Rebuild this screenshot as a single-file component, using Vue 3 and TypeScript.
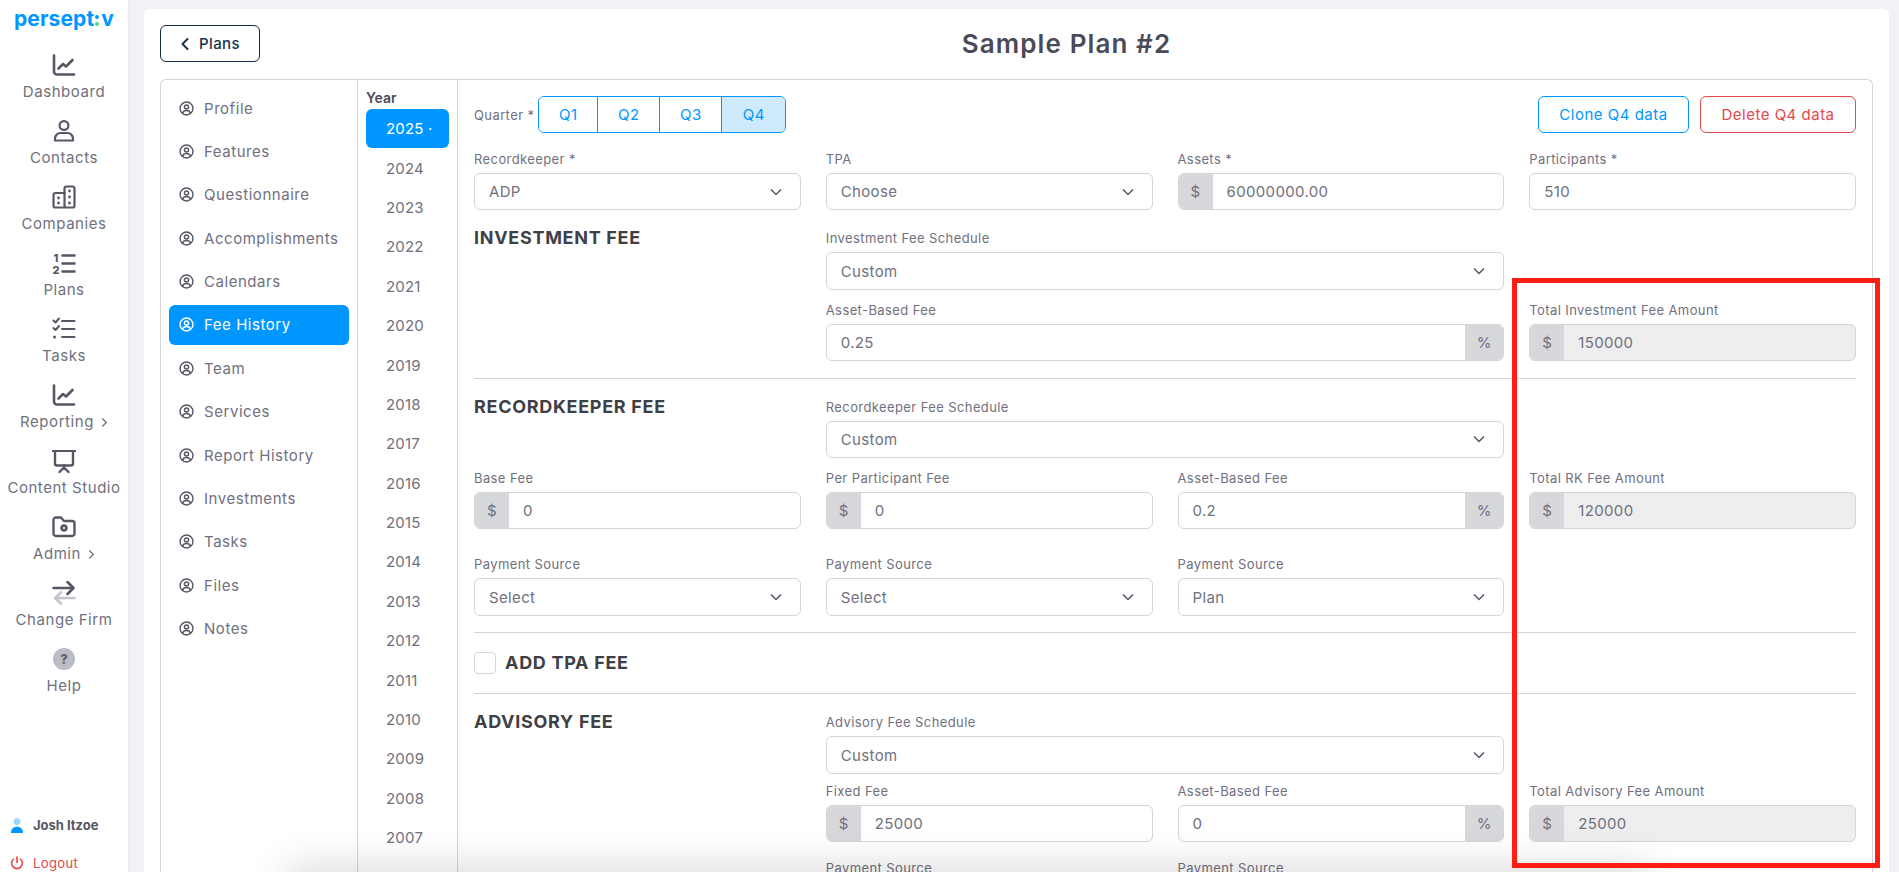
<script setup lang="ts">
const navItems = [
  { label: "Dashboard", icon: "chart" },
  { label: "Contacts", icon: "user" },
  { label: "Companies", icon: "company" },
  { label: "Plans", icon: "numbers" },
  { label: "Tasks", icon: "checks" },
  { label: "Reporting", icon: "chart", more: true },
  { label: "Content Studio", icon: "board" },
  { label: "Admin", icon: "folder", more: true },
  { label: "Change Firm", icon: "swap" },
  { label: "Help", icon: "help" },
];

const tabs = [
  "Profile",
  "Features",
  "Questionnaire",
  "Accomplishments",
  "Calendars",
  "Fee History",
  "Team",
  "Services",
  "Report History",
  "Investments",
  "Tasks",
  "Files",
  "Notes",
];

const years = Array.from({ length: 18 }, (_, i) => 2024 - i);
const quarters = ["Q1", "Q2", "Q3", "Q4"];
</script>

<template>
  <div class="page">
    <aside class="sidebar">
      <div class="logo">persept<span class="logo-dots"><i></i><i class="green"></i></span>v</div>
      <nav class="nav">
        <div v-for="item in navItems" :key="item.label" class="nav-item">
          <svg class="nav-icon" viewBox="0 0 24 24" fill="none" stroke="currentColor" stroke-width="2" stroke-linecap="round" stroke-linejoin="round">
            <template v-if="item.icon === 'chart'">
              <path d="M2 2.5v16a3 3 0 0 0 3 3h17" stroke-width="2.6" />
              <path d="M6.5 15.5l4.5-4.5 3 2.5 6.5-6.5" stroke-width="2.6" />
            </template>
            <template v-else-if="item.icon === 'user'">
              <circle cx="12" cy="6.5" r="4.4" stroke-width="2.2" />
              <path d="M3 21.5v-2a5.5 5.5 0 0 1 5.5-5.5h7a5.5 5.5 0 0 1 5.5 5.5v2z" stroke-width="2.2" />
            </template>
            <template v-else-if="item.icon === 'company'">
              <rect x="12.5" y="1.5" width="10" height="21" rx="2" stroke-width="2.2" />
              <path d="M12.5 8H3.5a2 2 0 0 0-2 2v10.5a2 2 0 0 0 2 2h9" stroke-width="2.2" />
              <path d="M6.5 13v.1M6.5 18v.1M17.5 6v.1M17.5 12v.1M17.5 18v.1" stroke-width="2.8" />
            </template>
            <template v-else-if="item.icon === 'numbers'">
              <text x="1.5" y="10.5" class="icon-digit">1</text>
              <text x="0.5" y="22.5" class="icon-digit">2</text>
              <path d="M10.5 4.5h12M10.5 12.5h12M10.5 20.5h12" stroke-width="2.6" />
            </template>
            <template v-else-if="item.icon === 'checks'">
              <path d="M1.5 3.5l2 2 3.5-4M1.5 11l2 2 3.5-4" stroke-width="2" />
              <path d="M2.5 20v.1" stroke-width="3" />
              <path d="M10 4h12.5M10 12h12.5M10 20h12.5" stroke-width="2" />
            </template>
            <template v-else-if="item.icon === 'board'">
              <path d="M0.5 2h23" stroke-width="2" />
              <path d="M3 2.5v12a2 2 0 0 0 2 2h14a2 2 0 0 0 2-2v-12" stroke-width="2.4" />
              <path d="M12 16.5v2M7.5 23l4.5-4.5 4.5 4.5" stroke-width="2.4" />
            </template>
            <template v-else-if="item.icon === 'folder'">
              <path d="M1.5 5a2.5 2.5 0 0 1 2.5-2.5h5l3 3.5h8a2.5 2.5 0 0 1 2.5 2.5v10a2.5 2.5 0 0 1-2.5 2.5H4a2.5 2.5 0 0 1-2.5-2.5z" stroke-width="2.4" />
              <circle cx="12" cy="13" r="2.4" stroke-width="2.8" stroke-dasharray="2.2 0.6" />
            </template>
            <template v-else-if="item.icon === 'swap'">
              <path d="M1.5 7h20M15.5 1l6 6-6 6" stroke-width="2.6" />
              <path d="M22.5 17H3M9 11.5L3 17l6 5.5" stroke="#c4c4cc" stroke-width="2.6" />
            </template>
            <template v-else>
              <circle cx="12" cy="12" r="11" fill="#bcbcc4" stroke="none" />
              <text x="12" y="16.5" class="icon-help">?</text>
            </template>
          </svg>
          <div class="nav-label">
            {{ item.label }}
            <svg v-if="item.more" class="nav-more" viewBox="0 0 8 12" fill="none" stroke="currentColor" stroke-width="1.5"><path d="M1.5 1.5L6 6l-4.5 4.5" /></svg>
          </div>
        </div>
      </nav>
      <div class="side-foot">
        <div class="foot-user">
          <svg viewBox="0 0 14 15" width="14" height="15">
            <circle cx="7" cy="3.6" r="3.4" fill="#99d5ff" />
            <path d="M1 15c0-4 2.4-6.2 6-6.2s6 2.2 6 6.2z" fill="#0096ff" />
          </svg>
          <span>Josh Itzoe</span>
        </div>
        <div class="foot-logout">
          <svg viewBox="0 0 14 14" width="14" height="14" fill="none" stroke="#e5484d" stroke-width="1.6" stroke-linecap="round">
            <path d="M7 1v5.5" />
            <path d="M3.6 3a5.4 5.4 0 1 0 6.8 0" />
          </svg>
          <span>Logout</span>
        </div>
      </div>
    </aside>

    <main class="card">
      <header class="head">
        <button class="back-btn">
          <svg viewBox="0 0 10 14" width="10" height="14" fill="none" stroke="currentColor" stroke-width="2" stroke-linecap="round" stroke-linejoin="round"><path d="M7.5 2L2.5 7l5 5" /></svg>
          Plans
        </button>
        <h1 class="title">Sample Plan #2</h1>
      </header>

      <div class="box">
        <div class="tabs">
          <div v-for="tab in tabs" :key="tab" class="tab" :class="{ active: tab === 'Fee History' }">
            <svg class="tab-icon" viewBox="0 0 16 16" fill="none" stroke="currentColor" stroke-width="1.5">
              <circle cx="8" cy="8" r="6.9" />
              <circle cx="8" cy="6.4" r="2.2" />
              <path d="M3.8 13c.6-2 2-2.8 4.2-2.8s3.6.8 4.2 2.8" />
            </svg>
            {{ tab }}
          </div>
        </div>

        <div class="years">
          <div class="year-title">Year</div>
          <div class="year active">2025 ·</div>
          <div v-for="y in years" :key="y" class="year">{{ y }}</div>
        </div>

        <div class="form">
          <div class="quarter-row">
            <span class="label inline">Quarter *</span>
            <div class="quarters">
              <button v-for="q in quarters" :key="q" class="quarter" :class="{ on: q === 'Q4' }">{{ q }}</button>
            </div>
            <button class="outline blue">Clone Q4 data</button>
            <button class="outline red">Delete Q4 data</button>
          </div>

          <div class="row top-row">
            <div class="field">
              <div class="label">Recordkeeper *</div>
              <div class="control select">ADP<svg class="caret" viewBox="0 0 12 8"><path d="M1 1.5l5 5 5-5" /></svg></div>
            </div>
            <div class="field">
              <div class="label">TPA</div>
              <div class="control select">Choose<svg class="caret" viewBox="0 0 12 8"><path d="M1 1.5l5 5 5-5" /></svg></div>
            </div>
            <div class="field">
              <div class="label">Assets *</div>
              <div class="control"><span class="addon">$</span><span class="val">60000000.00</span></div>
            </div>
            <div class="field">
              <div class="label">Participants *</div>
              <div class="control plain">510</div>
            </div>
          </div>

          <!-- investment fee -->
          <div class="row sec-row">
            <h3 class="sec-title">INVESTMENT FEE</h3>
            <div class="field span2">
              <div class="label">Investment Fee Schedule</div>
              <div class="control select">Custom<svg class="caret" viewBox="0 0 12 8"><path d="M1 1.5l5 5 5-5" /></svg></div>
            </div>
          </div>
          <div class="row next-row">
            <div class="field span2 from2">
              <div class="label">Asset-Based Fee</div>
              <div class="control"><span class="val nopad">0.25</span><span class="addon right">%</span></div>
            </div>
            <div class="field">
              <div class="label">Total Investment Fee Amount</div>
              <div class="control disabled"><span class="addon">$</span><span class="val">150000</span></div>
            </div>
          </div>
          <div class="divider"></div>

          <!-- recordkeeper fee -->
          <div class="row sec-row">
            <h3 class="sec-title">RECORDKEEPER FEE</h3>
            <div class="field span2">
              <div class="label">Recordkeeper Fee Schedule</div>
              <div class="control select">Custom<svg class="caret" viewBox="0 0 12 8"><path d="M1 1.5l5 5 5-5" /></svg></div>
            </div>
          </div>
          <div class="row next-row">
            <div class="field">
              <div class="label">Base Fee</div>
              <div class="control"><span class="addon">$</span><span class="val">0</span></div>
            </div>
            <div class="field">
              <div class="label">Per Participant Fee</div>
              <div class="control"><span class="addon">$</span><span class="val">0</span></div>
            </div>
            <div class="field">
              <div class="label">Asset-Based Fee</div>
              <div class="control"><span class="val nopad">0.2</span><span class="addon right">%</span></div>
            </div>
            <div class="field">
              <div class="label">Total RK Fee Amount</div>
              <div class="control disabled"><span class="addon">$</span><span class="val">120000</span></div>
            </div>
          </div>
          <div class="row pay-row">
            <div class="field">
              <div class="label">Payment Source</div>
              <div class="control select">Select<svg class="caret" viewBox="0 0 12 8"><path d="M1 1.5l5 5 5-5" /></svg></div>
            </div>
            <div class="field">
              <div class="label">Payment Source</div>
              <div class="control select">Select<svg class="caret" viewBox="0 0 12 8"><path d="M1 1.5l5 5 5-5" /></svg></div>
            </div>
            <div class="field">
              <div class="label">Payment Source</div>
              <div class="control select">Plan<svg class="caret" viewBox="0 0 12 8"><path d="M1 1.5l5 5 5-5" /></svg></div>
            </div>
          </div>
          <div class="divider"></div>

          <div class="tpa-row">
            <span class="check"></span>
            <h3 class="sec-title">ADD TPA FEE</h3>
          </div>
          <div class="divider no-gap"></div>

          <!-- advisory fee -->
          <div class="row sec-row">
            <h3 class="sec-title">ADVISORY FEE</h3>
            <div class="field span2">
              <div class="label">Advisory Fee Schedule</div>
              <div class="control select">Custom<svg class="caret" viewBox="0 0 12 8"><path d="M1 1.5l5 5 5-5" /></svg></div>
            </div>
          </div>
          <div class="row adv-row">
            <div class="field from2">
              <div class="label">Fixed Fee</div>
              <div class="control"><span class="addon">$</span><span class="val">25000</span></div>
            </div>
            <div class="field">
              <div class="label">Asset-Based Fee</div>
              <div class="control"><span class="val nopad">0</span><span class="addon right">%</span></div>
            </div>
            <div class="field">
              <div class="label">Total Advisory Fee Amount</div>
              <div class="control disabled"><span class="addon">$</span><span class="val">25000</span></div>
            </div>
          </div>
          <div class="row adv-pay">
            <div class="field from2">
              <div class="label">Payment Source</div>
            </div>
            <div class="field">
              <div class="label">Payment Source</div>
            </div>
          </div>
        </div>
      </div>
    </main>

    <div class="bottom-fade"></div>
    <div class="highlight"></div>
  </div>
</template>

<style>
html,
body {
  margin: 0;
  overflow: hidden;
}
</style>

<style scoped>
.page {
  position: relative;
  display: flex;
  width: 1899px;
  height: 872px;
  overflow: hidden;
  background: #f2f2f6;
  font-family: Inter, "Open Sans", sans-serif;
  color: #70707e;
}

.sidebar {
  width: 128px;
  flex-shrink: 0;
  background: #fff;
  display: flex;
  flex-direction: column;
  box-shadow: 1px 0 2px rgba(0, 0, 0, 0.04);
}

.logo {
  margin: 8px 0 0 14px;
  height: 25px;
  font-size: 21px;
  line-height: 22px;
  font-weight: 700;
  letter-spacing: 0.1px;
  color: #0096ff;
  display: flex;
}

.logo-dots {
  width: 5px;
  margin: 7px 1px 0 1px;
  display: flex;
  flex-direction: column;
  gap: 3px;
}

.logo-dots i {
  width: 4px;
  height: 4px;
  border-radius: 50%;
  background: #0096ff;
}

.logo-dots i.green {
  background: #55d68c;
}

.nav {
  margin-top: 20px;
  display: flex;
  flex-direction: column;
  gap: 17px;
}

.nav-item {
  height: 49px;
  display: flex;
  flex-direction: column;
  align-items: center;
  color: #565665;
}

.nav-icon {
  width: 24px;
  height: 24px;
  flex-shrink: 0;
}

.icon-digit {
  font-family: Inter, sans-serif;
  font-size: 11px;
  font-weight: 800;
  fill: currentColor;
  stroke: none;
}

.icon-help {
  font-family: Inter, sans-serif;
  font-size: 13px;
  font-weight: 800;
  fill: #5e5e6c;
  stroke: none;
  text-anchor: middle;
}

.nav-label {
  margin-top: 5px;
  font-size: 15px;
  line-height: 20px;
  color: #70707e;
  white-space: nowrap;
  letter-spacing: 0.55px;
  display: flex;
  align-items: center;
  gap: 7px;
}

.nav-more {
  width: 7px;
  height: 11px;
}

.side-foot {
  margin-top: auto;
  padding: 0 0 0 10px;
  font-size: 13px;
}

.foot-user,
.foot-logout {
  display: flex;
  align-items: center;
  gap: 9px;
}

.foot-user {
  font-weight: 700;
  color: #565665;
  height: 16px;
  margin-bottom: 22px;
}

.foot-logout {
  color: #e5484d;
  height: 16px;
  margin-bottom: 1px;
  letter-spacing: 0.4px;
}

.card {
  margin: 9px 10px 0 16px;
  flex: 1;
  min-width: 0;
  background: #fff;
  border-radius: 6px 6px 0 0;
  padding: 16px 16px 0;
}

.head {
  display: flex;
  align-items: center;
  height: 37px;
}

.back-btn {
  width: 100px;
  height: 37px;
  display: flex;
  align-items: center;
  justify-content: center;
  gap: 9px;
  background: #fff;
  border: 1px solid #0d2b45;
  border-radius: 6px;
  font: 500 15px Inter, sans-serif;
  letter-spacing: 0.4px;
  color: #16344d;
}

.title {
  flex: 1;
  margin: 0;
  text-align: center;
  font-size: 26px;
  font-weight: 600;
  color: #4a4a58;
  letter-spacing: 1.1px;
}

.box {
  margin-top: 17px;
  height: 830px;
  display: flex;
  border: 1px solid #d4d4d9;
  border-bottom: none;
  border-radius: 6px 6px 0 0;
}

.tabs {
  width: 197px;
  box-sizing: border-box;
  flex-shrink: 0;
  padding: 8px 8px 0;
  border-right: 1px solid #d4d4d9;
}

.tab {
  height: 40px;
  margin-bottom: 3.4px;
  padding-left: 10px;
  display: flex;
  align-items: center;
  gap: 10px;
  font-size: 15px;
  letter-spacing: 0.55px;
  border-radius: 6px;
  white-space: nowrap;
}

.tab.active {
  background: #0096ff;
  color: #fff;
}

.tab-icon {
  width: 15px;
  height: 15px;
  color: #565665;
  flex-shrink: 0;
}

.tab.active .tab-icon {
  color: #fff;
}

.years {
  width: 100px;
  box-sizing: border-box;
  flex-shrink: 0;
  padding: 10px 8px 0;
  border-right: 1px solid #d4d4d9;
}

.year-title {
  font-size: 14px;
  line-height: 16px;
  font-weight: 600;
  color: #4a4a58;
  margin-bottom: 3px;
}

.year {
  height: 39.4px;
  padding-left: 20px;
  display: flex;
  align-items: center;
  font-size: 15px;
  letter-spacing: 0.2px;
  border-radius: 6px;
}

.year.active {
  background: #0096ff;
  color: #fff;
}

.form {
  flex: 1;
  min-width: 0;
  padding: 16px 16px 0;
}

.quarter-row {
  display: flex;
  align-items: center;
  height: 37px;
}

.label {
  font-size: 13px;
  line-height: 16px;
  margin-bottom: 6px;
  white-space: nowrap;
  letter-spacing: 0.4px;
}

.label.inline {
  margin: 0 4px 0 0;
}

.quarters {
  display: flex;
  margin-right: auto;
  height: 37px;
  box-sizing: border-box;
  border: 1px solid #0096ff;
  border-radius: 6px;
  overflow: hidden;
}

.quarter {
  width: 62px;
  border: none;
  border-left: 1px solid #0096ff;
  background: #fff;
  color: #0096ff;
  font: 400 15px Inter, sans-serif;
  letter-spacing: 0.5px;
}

.quarter:first-child {
  width: 58px;
  border-left: none;
}

.quarter.on {
  width: 64px;
  background: #cfe9fd;
}

.outline {
  height: 37px;
  background: #fff;
  border-radius: 6px;
  font: 400 15px Inter, sans-serif;
  letter-spacing: 0.5px;
}

.outline.blue {
  width: 151px;
  border: 1px solid #0096ff;
  color: #0096ff;
  margin-right: 11px;
}

.outline.red {
  width: 156px;
  border: 1px solid #e5484d;
  color: #e5484d;
}

.row {
  display: grid;
  grid-template-columns: repeat(4, 1fr);
  column-gap: 25px;
}

.top-row {
  margin-top: 18px;
}

.sec-row {
  margin-top: 20px;
}

.next-row {
  margin-top: 12px;
}

.adv-row {
  margin-top: 9px;
}

.pay-row {
  margin-top: 27px;
}

.adv-pay {
  margin-top: 18px;
}

.span2 {
  grid-column: span 2;
}

.from2 {
  grid-column-start: 2;
}

.span2.from2 {
  grid-column: 2 / span 2;
}

.sec-title {
  margin: 0;
  font-size: 18px;
  line-height: 16px;
  font-weight: 700;
  letter-spacing: 0.7px;
  color: #3f3f46;
  white-space: nowrap;
}

.control {
  height: 37.4px;
  box-sizing: border-box;
  display: flex;
  align-items: center;
  border: 1px solid #d4d4d9;
  border-radius: 6px;
  overflow: hidden;
  font-size: 15px;
  letter-spacing: 0.35px;
  background: #fff;
}

.control.select {
  justify-content: space-between;
  padding: 0 18px 0 14px;
}

.control.plain {
  padding: 0 14px;
}

.caret {
  width: 12px;
  height: 8px;
  fill: none;
  stroke: #565665;
  stroke-width: 1.5;
}

.addon {
  width: 34px;
  height: 100%;
  flex-shrink: 0;
  display: flex;
  align-items: center;
  justify-content: center;
  background: #d7d8dc;
}

.addon.right {
  width: 38px;
}

.val {
  flex: 1;
  padding-left: 14px;
}

.control.disabled {
  background: #eeeeef;
}

.divider {
  height: 1px;
  margin-top: 16.5px;
  background: #d4d4d9;
}

.divider.no-gap {
  margin-top: 0;
}

.tpa-row {
  height: 60px;
  display: flex;
  align-items: center;
  gap: 9px;
}

.check {
  width: 22px;
  height: 22px;
  box-sizing: border-box;
  border: 1px solid #d4d4d9;
  border-radius: 4px;
  background: #fff;
}

.bottom-fade {
  position: absolute;
  left: 300px;
  right: 260px;
  top: 880px;
  height: 20px;
  box-shadow: 0 0 42px 12px rgba(0, 0, 0, 0.16);
  pointer-events: none;
}

.highlight {
  position: absolute;
  left: 1512px;
  top: 278px;
  width: 368px;
  height: 590px;
  box-sizing: border-box;
  border: 5px solid #ff1f12;
  pointer-events: none;
}
</style>
